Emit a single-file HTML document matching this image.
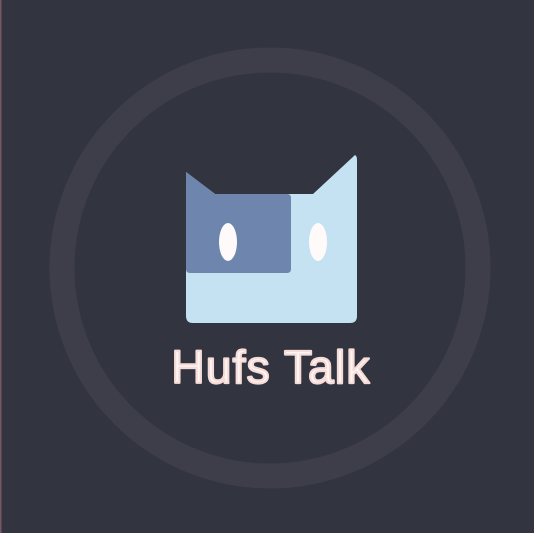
<!DOCTYPE html>
<html><head><style>
html,body{margin:0;padding:0;}
body{width:534px;height:533px;background:#32343f;position:relative;overflow:hidden;}
svg{position:absolute;left:0;top:0;}
</style></head><body>
<svg width="534" height="533" viewBox="0 0 534 533">
<rect x="0" y="0" width="534" height="533" fill="#32343f"/>
<rect x="0" y="0" width="1.5" height="533" fill="#7a5566"/>
<circle cx="270" cy="268" r="208" fill="none" stroke="#3e3e4b" stroke-width="25"/>
<path d="M186 172 L215 194 L313 194 L355 155 Q357 156 357 160 L357 316 Q357 323 350 323 L193 323 Q186 323 186 316 Z" fill="#c4e2f2"/>
<path d="M186 172 L215 194 L287 194 Q291 194 291 198 L291 269 Q291 273 287 273 L190 273 Q186 273 186 269 Z" fill="#6e86ad"/>
<ellipse cx="228" cy="242" rx="9" ry="19" fill="#fffafa"/>
<ellipse cx="318" cy="242" rx="9" ry="19" fill="#fffafa"/>
<text x="271" y="383" text-anchor="middle" font-family="Liberation Sans, sans-serif" font-size="46" letter-spacing="1.2" fill="#fff6f4" stroke="#f6dcd8" stroke-width="2.2" stroke-linejoin="round">Hufs Talk</text>
</svg>
</body></html>
